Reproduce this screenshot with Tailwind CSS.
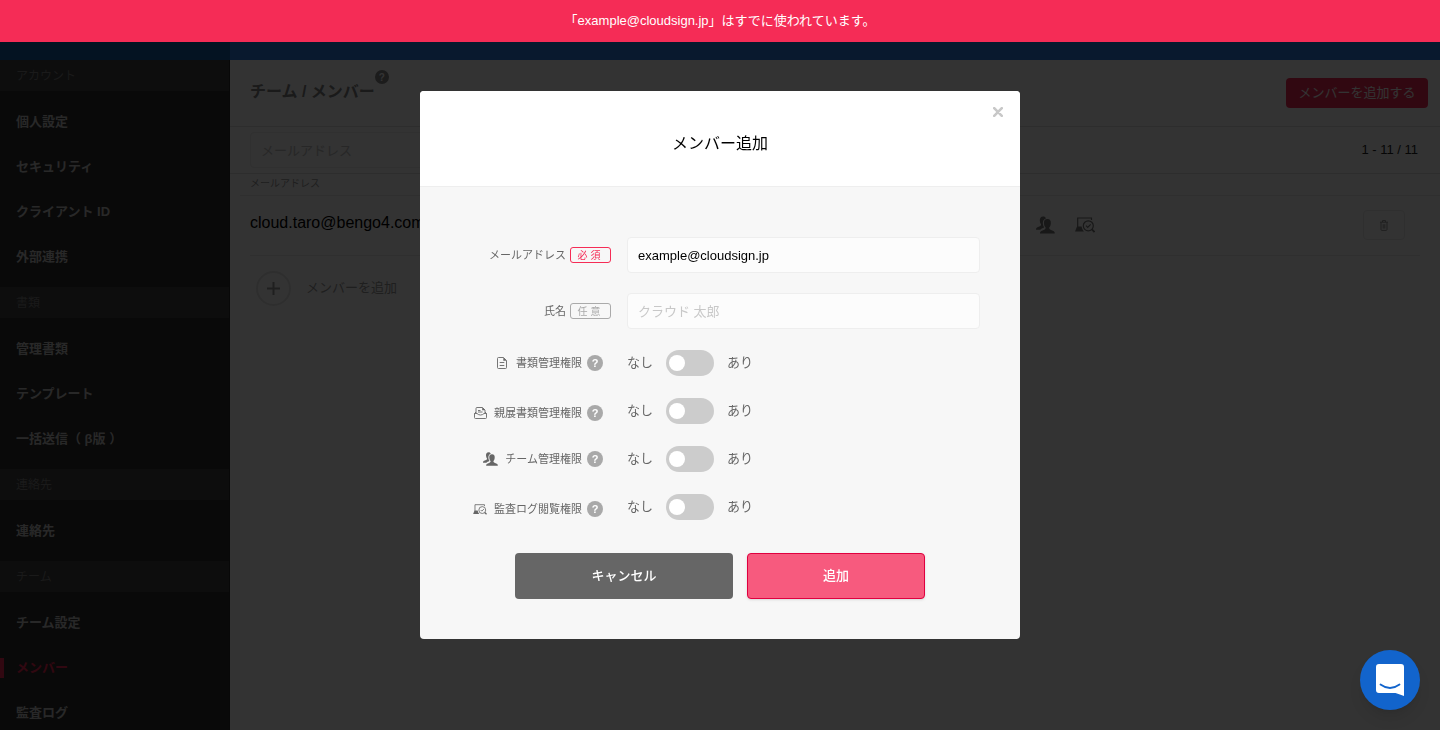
<!DOCTYPE html>
<html lang="ja">
<head>
  <meta charset="UTF-8">
  <meta name="viewport" content="width=device-width, initial-scale=1.0">
  <title>チーム / メンバー</title>
  <script src="https://cdn.jsdelivr.net/npm/@tailwindcss/browser@4"></script>
</head>
<body class="flex h-screen flex-col overflow-hidden bg-white font-['Liberation_Sans','Noto_Sans_CJK_JP',sans-serif] text-[13px] text-black">

  <!-- アイコン定義 -->
  <svg class="hidden">
    <symbol id="icon-team" viewBox="0 0 20 18">
      <path d="M7.500 0C4.900 0 3.900 1.800 4 4.200C4.100 6 4.600 7.300 5.300 8.200C5.400 9.200 5 9.700 4 10.200L1.500 11.300C.4 11.900 0 12.700 0 13.900H4.600C5.300 12.700 6.800 12.200 8.600 11.500C7.700 10.300 7.300 9 7.200 7.500C7 4.800 8.200 2.800 10.400 2.100C10 .7 9 0 7.500 0Z"/>
      <path d="M12 2.800C9.100 2.800 8.200 4.700 8.400 7.400C8.500 9.400 9.200 10.800 10.100 11.700C10.200 12.900 9.800 13.400 8.700 13.900L5.700 15.200C4.600 15.800 4.200 16.600 4.200 18H19.800C19.800 16.600 19.400 15.800 18.300 15.200L15.300 13.900C14.200 13.400 13.800 12.900 13.900 11.700C14.800 10.800 15.500 9.400 15.600 7.400C15.800 4.700 14.900 2.800 12 2.800Z"/>
    </symbol>
    <symbol id="icon-audit" viewBox="0 0 20 16">
      <path d="M2.700 10V1H16.500V3" fill="none" stroke="currentColor" stroke-width="1.200"/>
      <path d="M2 9.500H6.600C7 11.500 7.700 13.200 9 14.500H0Z"/>
      <circle cx="13.300" cy="8.800" r="5" fill="none" stroke="currentColor" stroke-width="1.200"/>
      <path d="M11 8.700L12.700 10.400L15.700 7.300" fill="none" stroke="currentColor" stroke-width="1.200"/>
      <path d="M16.900 12.400L19.500 15" fill="none" stroke="currentColor" stroke-width="1.800"/>
    </symbol>
    <symbol id="icon-doc" viewBox="0 0 10 12">
      <path d="M1.500.5H6.500L9.500 3.500V10.500Q9.500 11.500 8.500 11.500H1.500Q.5 11.500.5 10.500V1.500Q.5.5 1.500.5ZM2.700 5.500H7.300M2.700 8.500H7.300" fill="none" stroke="currentColor" stroke-width=".9"/>
      <path d="M6.300.5V3.700H9.500Z" fill="currentColor"/>
    </symbol>
    <symbol id="icon-inbox" viewBox="0 0 13 12">
      <path d="M2 6V1.500Q2 .5 3 .5H8.500L11 3V6M4 3.500H6.500M4 5H8.500" fill="none" stroke="currentColor" stroke-width=".9"/>
      <path d="M8.200.5V3.300H11Z" fill="currentColor"/>
      <path d="M2 5L.5 6.500V10.500Q.5 11.500 1.500 11.500H11.500Q12.500 11.500 12.500 10.500V6.500L11 5M.5 6.500H3Q4.500 8 6.500 8T10 6.500H12.500" fill="none" stroke="currentColor" stroke-width=".9"/>
    </symbol>
    <symbol id="icon-trash" viewBox="0 0 8 11">
      <path d="M0 2.200H8M2.500 2V.6H5.500V2M1 2.500V9.500Q1 10.400 1.900 10.400H6.100Q7 10.400 7 9.500V2.500M3.200 4.200V8.600M4.800 4.200V8.600" fill="none" stroke="currentColor"/>
    </symbol>
  </svg>

  <!-- ヘッダー -->
  <header class="flex h-[60px] shrink-0">
    <div class="w-[230px] bg-[#145faa]"></div>
    <div class="flex-1 bg-[#2d7de6]"></div>
  </header>

  <div class="flex min-h-0 flex-1">
    <!-- サイドバー -->
    <nav class="w-[230px] shrink-0 overflow-hidden border-r border-[#282828] bg-[#2d2d2d] font-bold text-[#c8c8c8]">
      <h2 class="flex h-[31px] items-center bg-[#414141] px-4 text-xs font-normal text-[#808080]">アカウント</h2>
      <ul class="py-2">
        <li><a href="#" class="flex h-[45px] items-center px-4">個人設定</a></li>
        <li><a href="#" class="flex h-[45px] items-center px-4">セキュリティ</a></li>
        <li><a href="#" class="flex h-[45px] items-center px-4">クライアント ID</a></li>
        <li><a href="#" class="flex h-[45px] items-center px-4">外部連携</a></li>
      </ul>
      <h2 class="flex h-[31px] items-center bg-[#414141] px-4 text-xs font-normal text-[#808080]">書類</h2>
      <ul class="py-2">
        <li><a href="#" class="flex h-[45px] items-center px-4">管理書類</a></li>
        <li><a href="#" class="flex h-[45px] items-center px-4">テンプレート</a></li>
        <li><a href="#" class="flex h-[45px] items-center px-4">一括送信（ β版 ）</a></li>
      </ul>
      <h2 class="flex h-[31px] items-center bg-[#414141] px-4 text-xs font-normal text-[#808080]">連絡先</h2>
      <ul class="py-2">
        <li><a href="#" class="flex h-[45px] items-center px-4">連絡先</a></li>
      </ul>
      <h2 class="flex h-[31px] items-center bg-[#414141] px-4 text-xs font-normal text-[#808080]">チーム</h2>
      <ul class="pt-2">
        <li><a href="#" class="flex h-[45px] items-center px-4">チーム設定</a></li>
        <li><a href="#" class="flex h-[45px] items-center gap-3 text-[#f52c56]"><span class="h-5 w-1 bg-[#f52c56]"></span>メンバー</a></li>
        <li><a href="#" class="flex h-[45px] items-center px-4">監査ログ</a></li>
      </ul>
    </nav>

    <!-- メンバー一覧 -->
    <main class="flex-1">
      <div class="flex h-[67px] items-start justify-between border-b border-[#e2e2e2] pt-[10px] pr-3 pl-5">
        <div class="flex items-start">
          <h1 class="pt-3 text-base leading-5 font-bold text-[#808080]">チーム / メンバー</h1>
          <span class="flex size-3.5 items-center justify-center rounded-full bg-[#8a8a8a] text-[10px] font-bold text-white">?</span>
        </div>
        <button type="button" class="mt-2 h-[30px] w-[142px] rounded bg-[#f52c56] text-white">メンバーを追加する</button>
      </div>
      <div class="flex h-[47px] items-center justify-between border-b border-[#e2e2e2] pr-[22px] pl-5">
        <input type="text" aria-label="メールアドレス" placeholder="メールアドレス" class="h-9 w-[300px] rounded border border-[#eee] bg-[#fcfcfc] px-[10px] placeholder:text-[#c0c0c0]">
        <span class="text-[#222]">1 - 11 / 11</span>
      </div>
      <div class="pl-[10px]">
        <table class="w-full border-collapse">
          <thead>
            <tr class="h-[21px] border-b border-[#ebebeb]">
              <th colspan="5" class="px-[10px] text-left text-[10px] leading-4 font-normal text-[#999]">メールアドレス</th>
            </tr>
          </thead>
          <tbody>
            <tr class="h-[60px]">
              <td class="w-[10px]"></td>
              <td class="border-b border-[#ebebeb] pb-1 text-base">cloud.taro@bengo4.com</td>
              <td class="w-[327px] border-b border-[#ebebeb] text-[#777]">
                <div class="flex items-center gap-5 fill-current">
                  <svg class="h-[18px] w-[19px]"><use href="#icon-team"/></svg>
                  <svg class="h-4 w-5"><use href="#icon-audit"/></svg>
                </div>
              </td>
              <td class="w-[57px] border-b border-[#ebebeb]">
                <button type="button" aria-label="削除" class="flex h-[30px] w-[42px] items-center justify-center rounded border border-[#ebebeb] text-[#999]">
                  <svg class="h-[11px] w-2"><use href="#icon-trash"/></svg>
                </button>
              </td>
              <td class="w-5"></td>
            </tr>
          </tbody>
        </table>
      </div>
      <button type="button" class="flex items-center gap-[15px] px-[26px] py-[15px] text-[#999]">
        <span class="flex size-[35px] items-center justify-center rounded-full border-2 border-[#e6e6e6]">
          <svg class="size-[13px]" viewBox="0 0 13 13"><path d="M6.500 0V13M0 6.500H13" stroke="currentColor" stroke-width="2"/></svg>
        </span>
        メンバーを追加
      </button>
    </main>
  </div>

  <!-- モーダル -->
  <div class="fixed inset-0 flex items-center justify-center bg-black/80">
    <section role="dialog" aria-labelledby="modal-title" class="relative w-[600px] overflow-hidden rounded bg-[#f7f7f7]">
      <button type="button" aria-label="閉じる" class="absolute top-4 right-[17px] text-[#c8c8c8]">
        <svg class="size-[10px]" viewBox="0 0 10 10"><path d="M1.200 1.200L8.800 8.800M8.800 1.200L1.200 8.800" stroke="currentColor" stroke-width="2.600" stroke-linecap="round"/></svg>
      </button>
      <div class="flex h-24 items-center justify-center border-b border-[#eee] bg-white pt-[10px]">
        <h2 id="modal-title" class="text-base">メンバー追加</h2>
      </div>

      <form class="px-10 pt-[50px] pb-10 text-[#666]">
        <div class="flex flex-col gap-5">
          <div class="flex items-center gap-4">
            <label for="email" class="flex w-[151px] items-center justify-end gap-1 text-[11px]">メールアドレス
              <span class="flex h-4 w-[41px] items-center justify-center rounded-[3px] border border-[#f52c56] text-[10px] tracking-[3px] text-[#f52c56]">必須</span>
            </label>
            <input id="email" type="email" value="example@cloudsign.jp" class="h-9 min-w-0 flex-1 rounded border border-[#eee] bg-[#fcfcfc] px-[10px] text-black">
          </div>
          <div class="flex items-center gap-4">
            <label for="name" class="flex w-[151px] items-center justify-end gap-1 text-[11px]">氏名
              <span class="flex h-4 w-[41px] items-center justify-center rounded-[3px] border border-[#aaa] text-[10px] tracking-[3px] text-[#aaa]">任意</span>
            </label>
            <input id="name" type="text" placeholder="クラウド 太郎" class="h-9 min-w-0 flex-1 rounded border border-[#eee] bg-[#fcfcfc] px-[10px] placeholder:text-[#c8c8c8]">
          </div>
        </div>

        <!-- 権限 -->
        <div class="flex flex-col gap-[22px] pt-[21px]">
          <div class="flex h-[26px] items-center">
            <label for="perm-doc" class="flex w-[143px] items-center justify-end gap-[5px] text-[11px]">
              <svg class="mr-1 h-3 w-[10px]"><use href="#icon-doc"/></svg>書類管理権限
              <span class="flex size-4 items-center justify-center rounded-full bg-[#a9a9a9] text-[11px] font-bold text-white">?</span>
            </label>
            <div class="flex items-center gap-[13px] pl-6">なし
              <input id="perm-doc" type="checkbox" class="h-[26px] w-12 appearance-none rounded-full bg-[#ccc] px-[3px] py-[5px] before:block before:size-4 before:rounded-full before:bg-white checked:bg-[#f52c56]">あり
            </div>
          </div>
          <div class="flex h-[26px] items-center">
            <label for="perm-secret" class="flex w-[143px] items-center justify-end gap-[5px] pt-1 text-[11px]">
              <svg class="mr-0.5 h-3 w-[13px]"><use href="#icon-inbox"/></svg>親展書類管理権限
              <span class="flex size-4 items-center justify-center rounded-full bg-[#a9a9a9] text-[11px] font-bold text-white">?</span>
            </label>
            <div class="flex items-center gap-[13px] pl-6">なし
              <input id="perm-secret" type="checkbox" class="h-[26px] w-12 appearance-none rounded-full bg-[#ccc] px-[3px] py-[5px] before:block before:size-4 before:rounded-full before:bg-white checked:bg-[#f52c56]">あり
            </div>
          </div>
          <div class="flex h-[26px] items-center">
            <label for="perm-team" class="flex w-[143px] items-center justify-end gap-[5px] text-[11px]">
              <svg class="mr-0.5 h-[14px] w-[15px] fill-current"><use href="#icon-team"/></svg>チーム管理権限
              <span class="flex size-4 items-center justify-center rounded-full bg-[#a9a9a9] text-[11px] font-bold text-white">?</span>
            </label>
            <div class="flex items-center gap-[13px] pl-6">なし
              <input id="perm-team" type="checkbox" class="h-[26px] w-12 appearance-none rounded-full bg-[#ccc] px-[3px] py-[5px] before:block before:size-4 before:rounded-full before:bg-white checked:bg-[#f52c56]">あり
            </div>
          </div>
          <div class="flex h-[26px] items-center">
            <label for="perm-audit" class="flex w-[143px] items-center justify-end gap-[5px] pt-1 text-[11px]">
              <svg class="mr-0.5 h-[11px] w-[14px] fill-current"><use href="#icon-audit"/></svg>監査ログ閲覧権限
              <span class="flex size-4 items-center justify-center rounded-full bg-[#a9a9a9] text-[11px] font-bold text-white">?</span>
            </label>
            <div class="flex items-center gap-[13px] pl-6">なし
              <input id="perm-audit" type="checkbox" class="h-[26px] w-12 appearance-none rounded-full bg-[#ccc] px-[3px] py-[5px] before:block before:size-4 before:rounded-full before:bg-white checked:bg-[#f52c56]">あり
            </div>
          </div>
        </div>

        <div class="flex justify-center gap-[14px] pt-[33px] font-medium text-white">
          <button type="button" class="h-[46px] w-[218px] rounded bg-[#666]">キャンセル</button>
          <button type="submit" class="h-[46px] w-[178px] rounded border border-[#e0003f] bg-[#f75a7e] shadow-sm">追加</button>
        </div>
      </form>
    </section>
  </div>

  <!-- エラーバナー -->
  <div role="alert" class="fixed inset-x-0 top-0 flex h-[42px] items-center justify-center bg-[#f52c56] text-white">「example@cloudsign.jp」はすでに使われています。</div>

  <!-- チャット -->
  <button type="button" aria-label="チャットを開く" class="fixed right-5 bottom-5 flex size-[60px] items-center justify-center rounded-full bg-[#1264cc] shadow-lg">
    <svg class="h-8 w-7" viewBox="0 0 28 32">
      <path d="M3 0H25Q28 0 28 3V32Q24 30.500 19.500 29H3Q0 29 0 26V3Q0 0 3 0Z" fill="#fff"/>
      <path d="M4.500 20.500Q14 27.500 23.500 20.500" fill="none" stroke="#1264cc" stroke-width="1.800" stroke-linecap="round"/>
    </svg>
  </button>

</body>
</html>
